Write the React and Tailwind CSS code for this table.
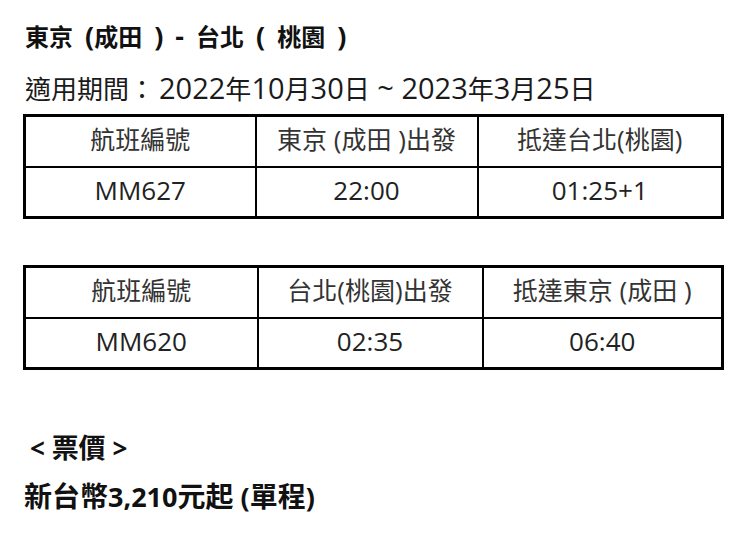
const CJK = /([\u3000-\u303f\u3400-\u9fff\uff00-\uffef]+)/;

function Mixed({ text, cjk, latin }) {
  return text
    .split(CJK)
    .filter(Boolean)
    .map((part, i) =>
      CJK.test(part) ? (
        <span key={i} className={cjk}>
          {part}
        </span>
      ) : (
        <span key={i} className={latin}>
          {part}
        </span>
      )
    );
}

export default function App() {
  const font = { fontFamily: '"Open Sans", "Noto Sans CJK TC", sans-serif' };
  return (
    <div
      className="w-[752px] h-[556px] bg-white text-[#111] pl-[23px] pr-[31px] pt-[18px]"
      style={font}
    >
      <h1 className="font-bold leading-[36px] pl-[2px] [word-spacing:5px]">
        <Mixed
          text="東京 (成田 ) - 台北 ( 桃園 )"
          cjk="text-[24px]"
          latin="text-[27px]"
        />
      </h1>
      <p className="leading-[36px] mt-[12px] pl-[2px] text-[#1a1a1a]">
        <Mixed text="適用期間" cjk="text-[26px]" latin="text-[29px]" />
        <span className="text-[26px] mr-[4px]">：</span>
        <Mixed
          text="2022年10月30日 ~ 2023年3月25日"
          cjk="text-[26px]"
          latin="text-[29px]"
        />
      </p>

      <FlightTable
        className="mt-[3px]"
        widths={["w-[231px]", "w-[222px]", "w-[245px]"]}
        head={["航班編號", "東京 (成田 )出發", "抵達台北(桃園)"]}
        row={["MM627", "22:00", "01:25+1"]}
      />
      <FlightTable
        className="mt-[46px]"
        widths={["w-[233px]", "w-[225px]", "w-[240px]"]}
        head={["航班編號", "台北(桃園)出發", "抵達東京 (成田 )"]}
        row={["MM620", "02:35", "06:40"]}
      />

      <p className="font-bold leading-[36px] mt-[60px] pl-[7px]">
        <Mixed text="< 票價 >" cjk="text-[27px]" latin="text-[26px]" />
      </p>
      <p className="font-bold leading-[36px] mt-[8px] pl-[1px]">
        <Mixed
          text="新台幣3,210元起 (單程)"
          cjk="text-[28px]"
          latin="text-[27px]"
        />
      </p>
    </div>
  );
}

function FlightTable({ className, widths, head, row }) {
  return (
    <table
      className={`w-[698px] border-collapse border-[3px] border-black table-fixed leading-[34px] ${className}`}
    >
      <tbody>
        <tr className="h-[51px]">
          {head.map((t, i) => (
            <td
              key={i}
              className={`${widths[i]} border-2 border-black text-center text-[#333] align-middle`}
            >
              <Mixed text={t} cjk="text-[25px]" latin="text-[26px]" />
            </td>
          ))}
        </tr>
        <tr className="h-[51px]">
          {row.map((t, i) => (
            <td
              key={i}
              className="border-2 border-black text-center text-[#222] align-middle"
            >
              <Mixed text={t} cjk="text-[25px]" latin="text-[26px]" />
            </td>
          ))}
        </tr>
      </tbody>
    </table>
  );
}
